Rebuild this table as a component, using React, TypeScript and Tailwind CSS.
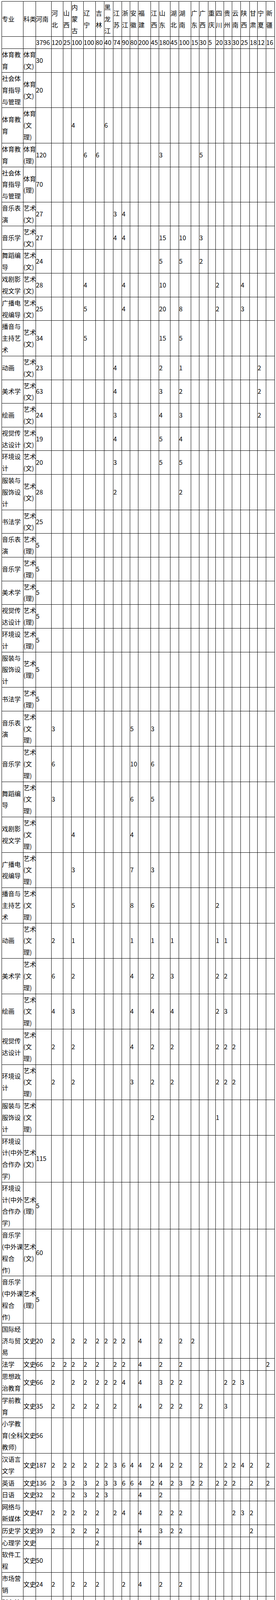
const provinces = [
  "河南", "河北", "山西", "内蒙古", "辽宁", "吉林", "黑龙江", "江苏", "浙江", "安徽", "福建", "江西", "山东",
  "湖北", "湖南", "广东", "广西", "重庆", "四川", "贵州", "云南", "陕西", "甘肃", "宁夏", "新疆",
];

// header text as it wraps in each column
const headLines = [
  "河南", "河/北", "山/西", "内/蒙/古", "辽/宁", "吉/林", "黑/龙/江", "江/苏", "浙/江", "安/徽", "福/建",
  "江/西", "山/东", "湖/北", "湖/南", "广/东", "广/西", "重/庆", "四/川", "贵/州", "云/南", "陕/西",
  "甘/肃", "宁/夏", "新/疆",
];

const totals = [
  "3796", "120", "25", "100", "100", "80", "40", "74", "90", "80", "200", "45", "180", "45", "100", "15", "30", "5",
  "20", "33", "30", "25", "18", "12", "16",
];

const colWidths = [
  "w-[55px]", "w-[32px]", "w-[40px]", "w-[30px]", "w-[21px]", "w-[31px]", "w-[31px]", "w-[22px]", "w-[23px]",
  "w-[22px]", "w-[21px]", "w-[21px]", "w-[32px]", "w-[21px]", "w-[29px]", "w-[22px]", "w-[31px]", "w-[21px]",
  "w-[23px]", "w-[19px]", "w-[21px]", "w-[21px]", "w-[22px]", "w-[23px]", "w-[20px]", "w-[22px]", "w-[22px]",
];

// [专业, 科类, "列号:人数 ..."]
const rows: [string, string, string][] = [
  ["体育教/育", "体育/(文)", "0:30"],
  ["社会体/育指导/与管理", "体育/(文)", "0:20"],
  ["体育教/育", "体育/(文/理)", "3:4 6:6"],
  ["体育教/育", "体育/(理)", "0:120 4:6 5:6 12:3 16:5"],
  ["社会体/育指导/与管理", "体育/(理)", "0:70"],
  ["音乐表/演", "艺术/(文)", "0:27 7:3 8:4"],
  ["音乐学", "艺术/(文)", "0:27 7:4 8:4 12:15 14:10 16:3"],
  ["舞蹈编/导", "艺术/(文)", "0:24 12:5 14:5 16:2"],
  ["戏剧影/视文学", "艺术/(文)", "0:28 4:4 8:4 12:10 18:2 21:4"],
  ["广播电/视编导", "艺术/(文)", "0:25 4:5 8:4 12:20 14:8 18:2 21:3"],
  ["播音与/主持艺/术", "艺术/(文)", "0:34 4:5 12:15 14:5"],
  ["动画", "艺术/(文)", "0:23 7:4 12:2 14:1 23:2"],
  ["美术学", "艺术/(文)", "0:63 7:4 12:3 14:2 23:2"],
  ["绘画", "艺术/(文)", "0:24 7:3 12:4 14:3 23:2"],
  ["视觉传/达设计", "艺术/(文)", "0:19 7:4 12:5 14:4"],
  ["环境设/计", "艺术/(文)", "0:20 7:3 12:5 14:5"],
  ["服装与/服饰设/计", "艺术/(文)", "0:28 7:2 14:2"],
  ["书法学", "艺术/(文)", "0:25"],
  ["音乐表/演", "艺术/(理)", "0:5"],
  ["音乐学", "艺术/(理)", "0:5"],
  ["美术学", "艺术/(理)", "0:5"],
  ["视觉传/达设计", "艺术/(理)", "0:5"],
  ["环境设/计", "艺术/(理)", "0:5"],
  ["服装与/服饰设/计", "艺术/(理)", "0:5"],
  ["书法学", "艺术/(理)", "0:5"],
  ["音乐表/演", "艺术/(文/理)", "1:3 9:5 11:3"],
  ["音乐学", "艺术/(文/理)", "1:6 9:10 11:6"],
  ["舞蹈编/导", "艺术/(文/理)", "1:3 9:6 11:5"],
  ["戏剧影/视文学", "艺术/(文/理)", "3:4 9:4"],
  ["广播电/视编导", "艺术/(文/理)", "3:3 9:7 11:3"],
  ["播音与/主持艺/术", "艺术/(文/理)", "3:5 9:8 11:6 18:2"],
  ["动画", "艺术/(文/理)", "1:2 3:1 9:1 11:1 13:1 18:1 19:1"],
  ["美术学", "艺术/(文/理)", "1:6 3:2 9:4 11:2 13:3 18:2 19:2"],
  ["绘画", "艺术/(文/理)", "1:4 3:3 9:4 11:4 13:4 18:2 19:3"],
  ["视觉传/达设计", "艺术/(文/理)", "1:2 3:2 9:4 11:2 13:2 18:2 19:2 20:2"],
  ["环境设/计", "艺术/(文/理)", "1:2 3:2 9:3 11:2 13:2 18:2 19:2 20:2"],
  ["服装与/服饰设/计", "艺术/(文/理)", "11:2 18:1"],
  ["环境设/计(中外/合作办/学)", "艺术/(文)", "0:115"],
  ["环境设/计(中外/合作办/学)", "艺术/(理)", "0:5"],
  ["音乐学/(中外课/程合/作)", "艺术/(文)", "0:60"],
  ["音乐学/(中外课/程合/作)", "艺术/(理)", "0:5"],
  ["国际经/济与贸/易", "文史", "0:20 1:2 3:2 4:2 5:2 6:2 7:2 8:2 10:4 12:2 14:2 15:2"],
  ["法学", "文史", "0:66 1:2 2:2 3:2 4:2 5:2 7:2 8:2 10:4 12:2 14:2 24:2"],
  ["思想政/治教育", "文史", "0:66 1:2 3:2 4:2 5:2 6:2 7:2 8:4 10:4 12:3 13:2 14:2 19:2 20:2 21:3"],
  ["学前教/育", "文史", "0:35 1:2 3:2 4:2 5:2 7:2 10:4 12:2 13:2 14:2 16:2 19:3"],
  ["小学教/育(全科/教师)", "文史", "0:56"],
  ["汉语言/文学", "文史", "0:187 1:2 2:2 3:2 4:2 5:2 6:2 7:3 8:6 9:4 10:4 11:2 12:4 13:2 14:2 16:2 19:2 20:2 21:4 22:2 24:2"],
  ["英语", "文史", "0:136 1:2 2:3 3:2 4:3 5:2 6:3 7:3 8:6 9:6 10:4 11:2 12:4 13:2 14:3 15:2 16:2 18:2 19:2 20:2 22:2 24:2"],
  ["日语", "文史", "0:32 1:2 3:2 4:3 5:2 6:3 10:4 12:2"],
  ["网络与/新媒体", "文史", "0:47 1:2 2:2 3:2 4:2 5:2 7:2 8:4 10:4 12:2 13:2 14:2 20:2 21:3 22:2"],
  ["历史学", "文史", "0:39 1:2 3:2 4:2 5:2 10:4 12:3 13:2 14:2 22:2"],
  ["心理学", "文史", "5:2 10:4"],
  ["软件工/程", "文史", "0:50"],
  ["市场营/销", "文史", "0:24 1:2 3:2 4:2 5:2 8:2 10:4 12:2 14:2"],
  ["财务管/理", "文史", "0:30 1:2 3:2 4:2 5:2 6:2 7:4 8:2 10:4 14:2 15:3"],
  ["人力资/源管理", "文史", "0:29 1:2 3:2 4:2 5:2 8:2 10:4 14:2"],
  ["物流管/理", "文史", "0:32 2:2 7:2 10:2 12:2"],
  ["电子商/务", "文史", "0:10 1:2 2:2 3:2 4:2 5:2 10:4 12:2 13:2 23:2"],
  ["国际经/济与贸/易", "理工", "0:18 3:2 5:2 10:4"],
  ["法学", "理工", "0:20 1:2 10:4 12:2 13:2"],
  ["学前教/育", "理工", "0:8 1:2 5:2 10:4 12:2 14:2"],
  ["小学教/育(全科/教师)", "理工", "0:58"],
  ["英语", "理工", "0:30 1:2 3:2 4:2 5:2 10:4 12:3"],
  ["日语", "理工", "1:2 3:2 4:2 5:2 6:2"],
  ["数学与/应用数/学", "理工", "0:127 1:2 3:2 4:2 5:2 6:2 7:3 8:6 9:6 10:4 11:3 12:4 13:3 14:2 16:2 18:2 20:2 22:2 23:2 24:2"],
  ["信息与/计算科/学", "理工", "0:44 1:2 3:2 4:2 8:4 10:4 12:2"],
  ["物理学", "理工", "0:83 1:2 2:2 3:2 4:2 5:2 6:2 7:2 10:4 12:2 13:2 14:2 16:3 19:2 20:2 21:2 22:2 24:2"],
  ["化学", "理工", "0:78 1:2 2:2 3:2 4:2 5:2 6:2 7:2 8:4 9:4 10:4 12:2 13:2 14:2 19:2 20:2 21:2 22:2 24:2"],
  ["应用化/学", "理工", "0:52 1:2 3:2 4:2 5:2 8:4 10:4 12:2"],
  ["生物科/学", "理工", "0:84 1:2 3:2 4:2 5:2 6:2 7:2 8:4 10:4 12:2 13:2 14:2 16:2 19:2 20:2 23:2 24:2"],
  ["生物技/术", "理工", "0:56 1:2 4:2 5:2 10:4 12:2 14:2"],
  ["心理学", "理工", "0:22 1:2 3:2 5:2 6:2 7:2 8:2 10:4 12:2 14:2 19:2"],
  ["应用统/计学", "理工", "0:48 1:2 4:2 10:4 14:2 19:2"],
  ["机械设/计制造/及其自/动化", "理工", "0:72 1:2 3:2 4:2 5:2 7:2 10:4 12:2 14:2"],
  ["材料化/学", "理工", "0:58 1:2 4:2 7:2 10:4 14:2"],
  ["电气工/程及其/自动化", "理工", "0:69 1:2 3:2 4:2 5:2 6:2 10:4 12:2 15:2 17:3"],
  ["电子信/息工程", "理工", "0:54 1:2 3:2 4:2 5:2 6:2 7:2 8:4 10:4 12:2 14:2 22:2"],
  ["光电信/息科学/与工程", "理工", "0:52 1:2 3:2 4:2 5:2 10:4 12:2 13:2 14:2"],
  ["自动化", "理工", "0:55 1:2 2:2 3:2 4:2 5:2 8:4 9:4 10:4 12:2 14:2 15:2 16:3 20:2 21:2"],
  ["机器人/工程", "理工", "0:62 1:2 4:2 10:4"],
  ["计算机/科学与/技术", "理工", "0:52 1:2 3:2 4:2 5:2 6:2 7:2 8:4 10:4 11:2 12:2 14:2 15:2"],
  ["计算机/科学与/技术(渗/透与测/试)", "理工", "0:42 1:2 10:4 12:2"],
  ["软件工/程", "理工", "0:80"],
  ["网络工/程", "理工", "0:52 1:2 4:2 5:2 6:2 7:2 8:4 10:4 12:2 13:2 20:2 21:2 24:2"],
  ["物联网/工程", "理工", "0:56 1:2 2:2 3:2 4:2 5:2 7:2 10:4 12:2 14:2 16:2 20:2"],
  ["智能科/学与技/术", "理工", "0:52 1:2 10:4 12:2"],
  ["数据科/学与大/数据技/术", "理工", "0:68 1:2 10:4 12:2 15:2 17:2"],
  ["建筑电/气与智/能化", "理工", "0:60 1:2 3:2 4:2 10:4"],
  ["化学工/程与工/艺", "理工", "0:60 1:2 4:2 10:4 12:2"],
  ["环境工/程", "理工", "0:56 1:2 3:2 4:2 10:4 12:2 22:2"],
  ["食品质/量与安/全", "理工", "0:58 1:2 3:2 4:2 10:4 12:2"],
  ["生物工/程", "理工", "0:42 1:2 2:2 3:2 4:2 8:4 10:4 12:2"],
  ["生物制/药", "理工", "0:50 1:2 2:2 3:2 4:2 7:2 12:2 13:2 14:2 19:2 20:2"],
  ["市场营/销", "理工", "0:10 3:2 5:2 10:4"],
  ["财务管/理", "理工", "0:53 1:2 3:2 5:2 10:4 12:2"],
  ["人力资/源管理", "理工", "0:17 5:2 10:4 12:2"],
  ["物流管/理", "理工", "0:12 10:2 16:2 19:2 20:2"],
  ["电子商/务", "理工", "0:20 5:2 10:4 12:2 13:2"],
  ["网络工/程(中外/合作办/学)", "理工", "0:120"],
];

function spread(v: string) {
  const out: string[] = Array(provinces.length).fill("");
  v.split(" ").forEach((p) => {
    const [i, n] = p.split(":");
    out[Number(i)] = n;
  });
  return out;
}

// every line of a cell is a fixed-height block so rows keep the reference's height
function Cell({ text = "" }: { text?: string }) {
  return (
    <td className="border border-black p-0 text-left align-middle">
      {text.split("/").map((line, i) => (
        <div key={i} className="h-[29.84px] whitespace-nowrap leading-[29.84px]">
          {line}
        </div>
      ))}
    </td>
  );
}

export default function App() {
  return (
    <div className="bg-white pl-[4px] pt-[3px] font-['Noto_Sans_CJK_SC',sans-serif] text-[16px] leading-[29.84px] text-black">
      <table className="w-[698px] table-fixed border-collapse">
        <colgroup>
          {colWidths.map((w, i) => (
            <col key={i} className={w} />
          ))}
        </colgroup>
        <tbody>
          <tr>
            <Cell text="专业" />
            <Cell text="科类" />
            {headLines.map((h, i) => (
              <Cell key={provinces[i]} text={h} />
            ))}
          </tr>
          <tr>
            <Cell />
            <Cell />
            {totals.map((t, i) => (
              <Cell key={i} text={t} />
            ))}
          </tr>
          {rows.map(([name, cat, vals], r) => (
            <tr key={r}>
              <Cell text={name} />
              <Cell text={cat} />
              {spread(vals).map((v, i) => (
                <Cell key={i} text={v} />
              ))}
            </tr>
          ))}
        </tbody>
      </table>
      <div className="w-[698px]">
        <p className="whitespace-nowrap">注：江苏省科类为文理综合，浙江录取科类为综合改革，另有少数民族预科计划35人，实际计划以</p>
        <p className="whitespace-nowrap">教育部计划管理系统为准。</p>
      </div>
    </div>
  );
}
